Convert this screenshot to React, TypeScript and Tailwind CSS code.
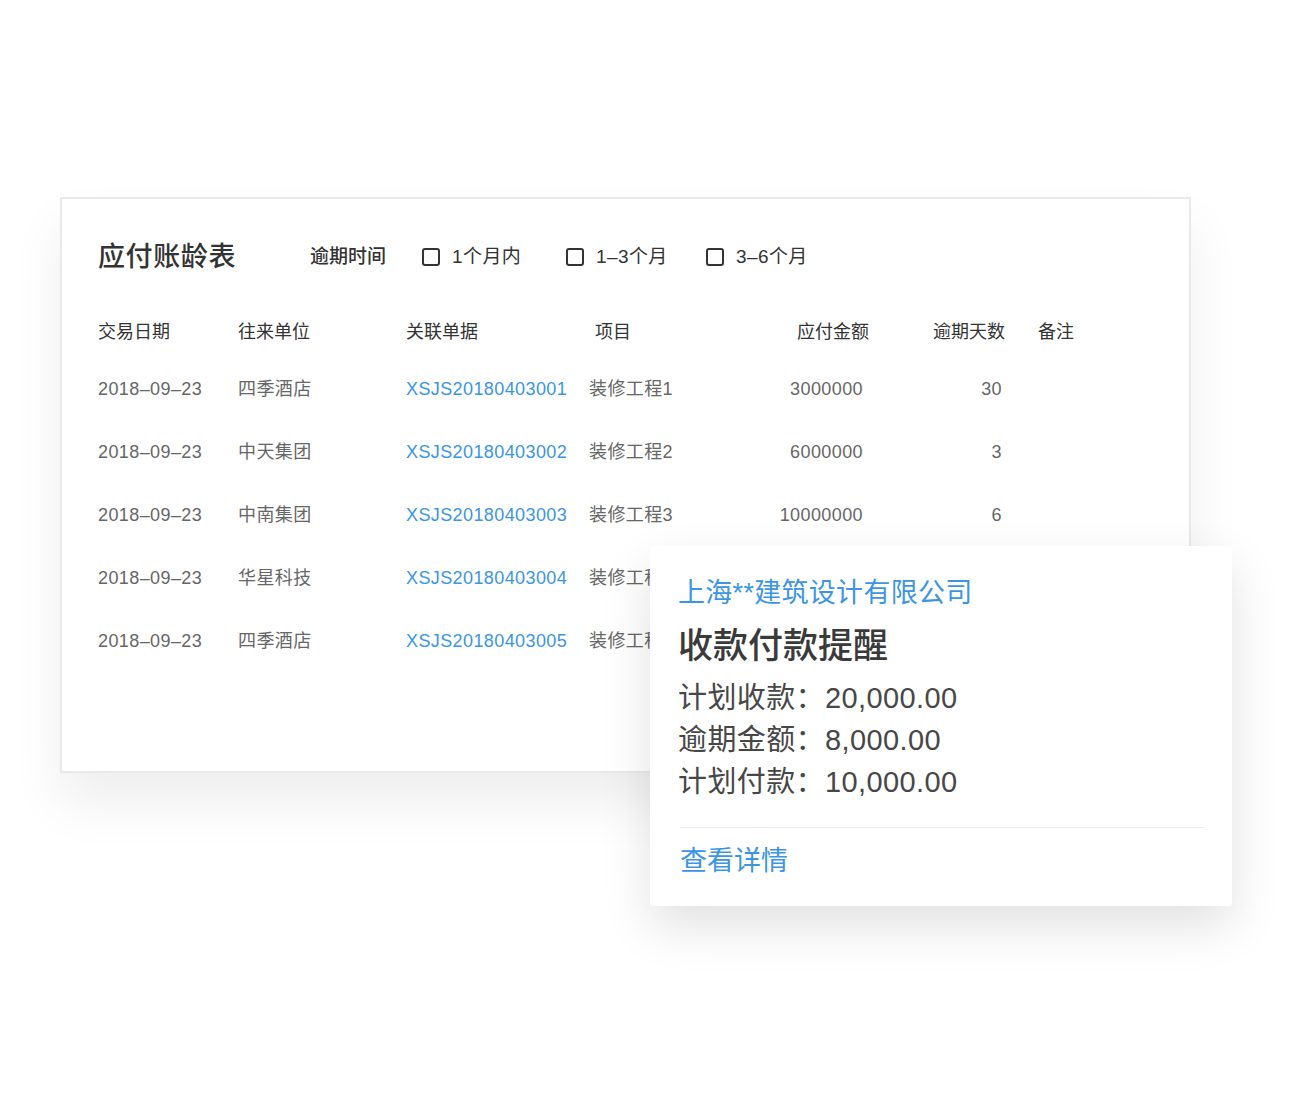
import React from 'react';

const rows = [
  { date: '2018–09–23', unit: '四季酒店', code: 'XSJS20180403001', item: '装修工程1', amount: '3000000', days: '30' },
  { date: '2018–09–23', unit: '中天集团', code: 'XSJS20180403002', item: '装修工程2', amount: '6000000', days: '3' },
  { date: '2018–09–23', unit: '中南集团', code: 'XSJS20180403003', item: '装修工程3', amount: '10000000', days: '6' },
  // the last two rows sit under the reminder popup, only the left part shows
  { date: '2018–09–23', unit: '华星科技', code: 'XSJS20180403004', item: '装修工程4', amount: '', days: '' },
  { date: '2018–09–23', unit: '四季酒店', code: 'XSJS20180403005', item: '装修工程5', amount: '', days: '' },
];

const Checkbox: React.FC<{ label: string; className?: string }> = ({ label, className }) => (
  <label className={`flex items-center ${className ?? ''}`}>
    <span className="w-[18px] h-[18px] border-2 border-[#333] rounded-[3px] mr-[12px]" />
    <span>{label}</span>
  </label>
);

export default function App() {
  return (
    <div
      className="relative w-[1300px] h-[1120px] bg-white overflow-hidden"
      style={{ fontFamily: '"Liberation Sans", "Noto Sans CJK SC", sans-serif' }}
    >
      {/* main table card */}
      <div className="ml-[60px] mt-[197px] w-[1131px] h-[576px] border-2 border-[#e9e9e9] bg-white pl-[36px] pt-[40px] shadow-[0_30px_50px_rgba(0,0,0,0.07)]">
        <div className="flex items-center h-[36px] text-[#333]">
          <h1 className="text-[27px] font-medium tracking-[0.6px]">应付账龄表</h1>
          <span className="ml-[74px] text-[19px] font-medium">逾期时间</span>
          <div className="flex items-center text-[19px] tracking-[0.4px] ml-[36px]">
            <Checkbox label="1个月内" className="w-[144px]" />
            <Checkbox label="1–3个月" className="w-[140px]" />
            <Checkbox label="3–6个月" />
          </div>
        </div>

        <div className="flex items-center h-[24px] mt-[45px] text-[18px] text-[#333]">
          <div className="w-[140px]">交易日期</div>
          <div className="w-[168px]">往来单位</div>
          <div className="w-[183px]">关联单据</div>
          <div className="w-[131px] pl-[6px]">项目</div>
          <div className="w-[149px] text-right">应付金额</div>
          <div className="w-[136px] text-right">逾期天数</div>
          <div className="pl-[33px]">备注</div>
        </div>

        <div className="mt-[14px] text-[18px] text-[#666] tracking-[0.4px]">
          {rows.map((r) => (
            <div key={r.code} className="flex items-center h-[63px]">
              <div className="w-[140px]">{r.date}</div>
              <div className="w-[168px]">{r.unit}</div>
              <div className="w-[183px] text-[#3b95e4]">{r.code}</div>
              <div className="w-[131px]">{r.item}</div>
              <div className="w-[149px] text-right pr-[6px]">{r.amount}</div>
              <div className="w-[136px] text-right pr-[3px]">{r.days}</div>
            </div>
          ))}
        </div>
      </div>

      {/* reminder popup */}
      <div className="absolute left-[650px] top-[546px] w-[582px] h-[360px] bg-white rounded-[4px] px-[28px] pt-[29px] shadow-[0_20px_50px_rgba(0,0,0,0.12)]">
        <div className="h-[36px] leading-[36px] text-[27px] tracking-[0.3px] text-[#3b95e4]">上海**建筑设计有限公司</div>
        <div className="h-[46px] leading-[46px] mt-[12px] text-[35px] font-medium text-[#3a3a3a]">收款付款提醒</div>
        <div className="mt-[8px] text-[29px] leading-[42px] tracking-[0.4px] text-[#474747]">
          <div>计划收款：20,000.00</div>
          <div>逾期金额：8,000.00</div>
          <div>计划付款：10,000.00</div>
        </div>
        <div className="mt-[24px] ml-[2px] h-px bg-[#ececec]" />
        <div className="mt-[15px] ml-[2px] h-[36px] leading-[36px] text-[27px] text-[#3b95e4]">查看详情</div>
      </div>
    </div>
  );
}
